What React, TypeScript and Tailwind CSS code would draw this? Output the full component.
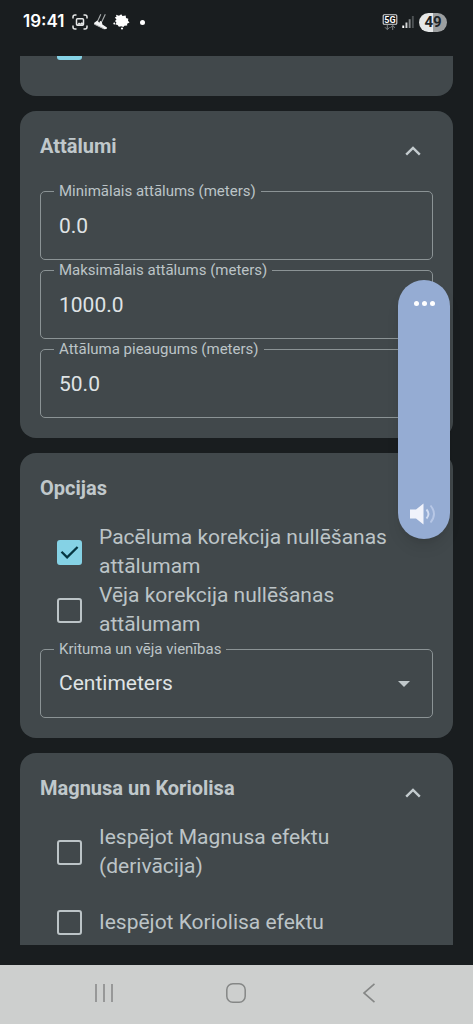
import React, { useId } from 'react'

interface OutlinedFieldProps {
  label: string
  value: string
}

interface CheckRowProps {
  label: string
  defaultChecked?: boolean
}

interface CardProps {
  title: string
  collapsible?: boolean
  children: React.ReactNode
}

const Card = ({ title, collapsible, children }: CardProps) => (
  <section className="rounded-2xl bg-[#41484b] px-5 pb-5">
    <div className="flex h-[70px] items-start justify-between pt-5">
      <h2 className="text-xl leading-[30px] font-bold text-[#c0c8cb]">{title}</h2>
      {collapsible && (
        <button type="button" aria-label="Sakļaut" className="flex size-10 items-center justify-center text-[#c4cccf]">
          <svg viewBox="0 0 16 10" className="h-[10px] w-4" fill="none" stroke="currentColor" strokeWidth="2.4">
            <path d="M1.2 8.6 8 1.9l6.8 6.7" />
          </svg>
        </button>
      )}
    </div>
    {children}
  </section>
)

const fieldsetClass = 'relative min-w-0 rounded-[5px] border border-[#8b9395]'
const legendClass = 'ml-[13px] px-[5px] text-[15px] leading-5 text-[#bcc4c7]'
const controlClass = 'mb-2 block h-[50px] w-full appearance-none bg-transparent px-[18px] text-[21px] text-[#dfe3e5] outline-none'

const OutlinedField = ({ label, value }: OutlinedFieldProps) => {
  const id = useId()
  return (
    <fieldset className={fieldsetClass}>
      <legend className={legendClass}>
        <label htmlFor={id}>{label}</label>
      </legend>
      <input id={id} type="text" inputMode="decimal" defaultValue={value} className={controlClass} />
    </fieldset>
  )
}

const OutlinedSelect = ({ label, value }: OutlinedFieldProps) => {
  const id = useId()
  return (
    <fieldset className={fieldsetClass}>
      <legend className={legendClass}>
        <label htmlFor={id}>{label}</label>
      </legend>
      <div className="relative">
        <select id={id} defaultValue={value} className={controlClass}>
          <option>{value}</option>
        </select>
        <svg viewBox="0 0 12 6" className="pointer-events-none absolute top-[22px] right-[22px] h-[6px] w-3" fill="#c0c8cb">
          <path d="M0 0h12L6 6z" />
        </svg>
      </div>
    </fieldset>
  )
}

const CheckRow = ({ label, defaultChecked }: CheckRowProps) => (
  <label className="flex min-h-[58px] items-center gap-[17px] pr-5 pl-[17px] text-[21px] leading-[29px] text-[#bcc4c7]">
    <span className="relative flex size-[25px] shrink-0">
      <input
        type="checkbox"
        defaultChecked={defaultChecked}
        className="peer size-[25px] appearance-none rounded-[3px] border-2 border-[#bcc4c7] checked:border-[#85d2e5] checked:bg-[#85d2e5]"
      />
      <svg
        viewBox="0 0 25 25"
        className="pointer-events-none absolute inset-0 hidden peer-checked:block"
        fill="none"
        stroke="#063642"
        strokeWidth="2.3"
      >
        <path d="m4.5 11.8 5.6 5.6L20.6 7" />
      </svg>
    </span>
    <span>{label}</span>
  </label>
)

const StatusBar = () => (
  <header className="flex h-11 shrink-0 items-center justify-between pr-[26px] pl-[23px] text-white">
    <div className="flex items-center">
      <span className="w-[49px] text-[17px] font-semibold font-['Inter','Roboto',sans-serif]">19:41</span>
      <svg viewBox="0 0 16 16" className="size-4" fill="none" stroke="#e6e8e8" strokeWidth="1.5">
        <path d="M1 4.5V3a2 2 0 0 1 2-2h1.5M11.500 1H13a2 2 0 0 1 2 2v1.500M15 11.500V13a2 2 0 0 1-2 2h-1.500M4.500 15H3a2 2 0 0 1-2-2v-1.500" />
        <rect x="4.500" y="4.800" width="7" height="6.400" rx="1" />
        <path d="m5 10.500 2-2 1.500 1 1.500-1.500 1.500 2v.8H5z" fill="#e6e8e8" stroke="none" />
      </svg>
      <svg viewBox="0 0 16 16" className="ml-[5px] size-4">
        <path d="M7.800.3 4.600 7.200M12.300.3 8.800 7.800" stroke="#a9adae" strokeWidth="1.100" />
        <path d="M4.300 6.600 1 9l.3 1.500 9.600 4.800 2.700-.2.4-1.500-4.600-3-.6-3.200-1.700-.3-.8 1.600z" fill="#f4f5f5" />
        <path d="m1 10 9.800 4.700" stroke="#8b8f90" strokeWidth=".7" />
      </svg>
      <svg viewBox="0 0 17 16" className="ml-1 h-4 w-[17px]" fill="#fff">
        <path d="M3 .8 6 1.700 8.200.2l1.300 1.900 3.200-.5.3 2.400 2.300.8-.3 2 1.500 1.700-2.400 1.200.1 1.700-2.800.3-1 1.200-2.200-.7-2.300.6-1.300-1.900-2.100-.3.900-2.200L2 6.900l1.500-1.300L1.800 3.400l1.700-.6z" />
        <circle cx="1.300" cy="9.600" r="1" />
        <circle cx="9" cy="14.500" r="1.100" />
      </svg>
      <span className="ml-[10px] size-[5px] rounded-full bg-white" />
    </div>
    <div className="flex items-center">
      <svg viewBox="0 0 16 17" className="h-[17px] w-4">
        <rect x="1.200" y=".7" width="13.600" height="9.600" rx="1" fill="#101314" stroke="#d5d8d9" strokeWidth="1.100" />
        <text x="8" y="8.700" textAnchor="middle" fontSize="9" fontWeight="700" fill="#fff" fontFamily="Roboto, sans-serif">
          5G
        </text>
        <path d="M5.300 11v4.500M3 13.300l2.300 2.300 2.200-2.300M10.700 16v-4.500M8.500 13.800l2.200-2.300 2.300 2.300" fill="none" stroke="#7f8486" />
      </svg>
      <svg viewBox="0 0 12 12" className="ml-1 h-3 w-3">
        <path d="M.3 9.500h1.900V12H.3z" fill="#fff" />
        <path d="M3.500 6.500h1.900V12H3.500z" fill="#d3d6d7" />
        <path d="M6.700 3.200h1.900V12H6.700z" fill="#85898b" />
        <path d="M9.900 0h1.900v12H9.900z" fill="#4d5254" />
      </svg>
      <span className="ml-[5px] flex h-[19px] w-7 items-center justify-center rounded-full bg-linear-to-r from-[#e6e8e8] from-50% to-[#9c9fa0] to-50% text-[15px] font-bold text-[#202426]">
        49
      </span>
    </div>
  </header>
)

const VolumePanel = () => (
  <aside className="absolute top-[280px] right-[23px] flex h-[259px] w-[52px] flex-col items-center overflow-hidden rounded-full bg-[#95acd3] shadow-lg">
    <button type="button" aria-label="Vairāk" className="flex h-[46px] w-full items-center justify-center gap-[3px]">
      <span className="size-[5px] rounded-full bg-white" />
      <span className="size-[5px] rounded-full bg-white" />
      <span className="size-[5px] rounded-full bg-white" />
    </button>
    <input
      type="range"
      aria-label="Skaļums"
      defaultValue={100}
      className="min-h-0 w-full flex-1 appearance-none bg-transparent [writing-mode:vertical-lr] [&::-webkit-slider-thumb]:opacity-0"
    />
    <svg viewBox="0 0 28 22" className="mb-[14px] h-[22px] w-7 shrink-0" fill="none">
      <path d="M0 6.500h6L13.500.500v21L6 15.500H0z" fill="#f1f3fb" />
      <path d="M16.500 6.500q4 4.500 0 9" stroke="#d3ddf2" strokeWidth="1.900" />
      <path d="M20.500 2.500q7 8.500 0 17" stroke="#b7c7e6" strokeWidth="1.900" />
    </svg>
  </aside>
)

const NavBar = () => (
  <nav className="grid h-[59px] shrink-0 grid-cols-3 bg-[#cdcfce] px-[38px] pb-1 text-[#858786]">
    <button type="button" aria-label="Nesenās lietotnes" className="flex items-center justify-center">
      <svg viewBox="0 0 20 20" className="size-5" fill="none" stroke="currentColor" strokeWidth="1.500">
        <path d="M2 1v18M10 1v18M18 1v18" />
      </svg>
    </button>
    <button type="button" aria-label="Sākums" className="flex items-center justify-center">
      <svg viewBox="0 0 20 20" className="size-5" fill="none" stroke="currentColor" strokeWidth="1.500">
        <rect x=".8" y=".8" width="18.400" height="18.400" rx="6" />
      </svg>
    </button>
    <button type="button" aria-label="Atpakaļ" className="flex items-center justify-center">
      <svg viewBox="0 0 12 20" className="h-5 w-3" fill="none" stroke="currentColor" strokeWidth="1.700">
        <path d="M11.500.8.900 10l10.600 9.200" />
      </svg>
    </button>
  </nav>
)

export default function App() {
  return (
    <div className="relative flex h-screen flex-col bg-[#191d1f] font-['Roboto','Noto_Sans',sans-serif]">
      <StatusBar />

      <main className="mt-3 mb-5 flex min-h-0 flex-1 flex-col gap-[15px] overflow-hidden px-5 *:shrink-0">
        {/* tail of the card scrolled off the top */}
        <div className="h-10 rounded-b-2xl bg-[#41484b] pl-[37px]">
          <div className="flex h-1 w-[25px] items-end overflow-hidden rounded-b-[3px]">
            <input type="checkbox" defaultChecked aria-label="Opcija" className="size-[25px] shrink-0 appearance-none bg-[#85d2e5]" />
          </div>
        </div>

        <Card title="Attālumi" collapsible>
          <OutlinedField label="Minimālais attālums (meters)" value="0.0" />
          <OutlinedField label="Maksimālais attālums (meters)" value="1000.0" />
          <OutlinedField label="Attāluma pieaugums (meters)" value="50.0" />
        </Card>

        <Card title="Opcijas">
          <CheckRow label="Pacēluma korekcija nullēšanas attālumam" defaultChecked />
          <CheckRow label="Vēja korekcija nullēšanas attālumam" />
          <OutlinedSelect label="Krituma un vēja vienības" value="Centimeters" />
        </Card>

        <Card title="Magnusa un Koriolisa" collapsible>
          <div className="flex flex-col gap-3">
            <CheckRow label="Iespējot Magnusa efektu (derivācija)" />
            <CheckRow label="Iespējot Koriolisa efektu" />
          </div>
        </Card>
      </main>

      <VolumePanel />
      <NavBar />
    </div>
  )
}
